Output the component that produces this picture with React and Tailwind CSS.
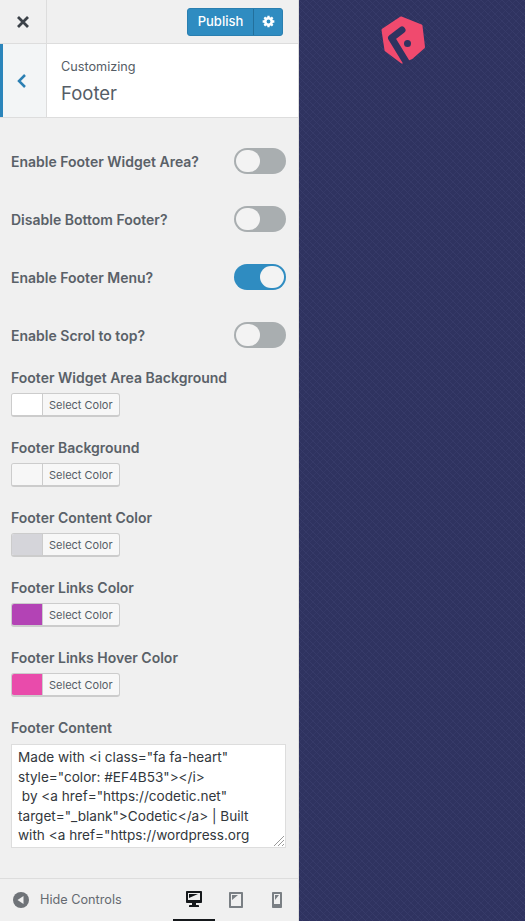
import React from "react";

const toggles = [
  { label: "Enable Footer Widget Area?", on: false },
  { label: "Disable Bottom Footer?", on: false },
  { label: "Enable Footer Menu?", on: true },
  { label: "Enable Scrol to top?", on: false },
];

const colors = [
  { label: "Footer Widget Area Background", swatch: "bg-white" },
  { label: "Footer Background", swatch: "bg-[#f7f7f7]" },
  { label: "Footer Content Color", swatch: "bg-[#d5d5da]" },
  { label: "Footer Links Color", swatch: "bg-[#b343b5]" },
  { label: "Footer Links Hover Color", swatch: "bg-[#e94bab]" },
];

const Toggle = ({ on }) => (
  <div
    className={`flex h-[26px] w-[52px] items-center rounded-full p-[2px] ${
      on ? "justify-end bg-[#2f8cc1]" : "justify-start bg-[#a9aeb0]"
    }`}
  >
    <div className="h-[22px] w-[24px] rounded-full bg-[#f3f3f3]" />
  </div>
);

const ColorButton = ({ swatch }) => (
  <div className="flex h-[24px] w-[109px] overflow-hidden rounded-[3px] border border-[#cccccc] border-b-[2px] bg-[#f7f7f7]">
    <div className={`w-[31px] border-r border-[#cccccc] ${swatch}`} />
    <div className="flex-1 pl-[6px] text-[11px] leading-[22px] text-[#555d66]">Select Color</div>
  </div>
);

const Logo = () => (
  <svg width="46" height="50" viewBox="0 0 46 50">
    <path
      d="M21 3 L41 11 L43.500 32 L31 43 L22 47 L6 35 L3 15 Z"
      fill="#f04a6e"
      stroke="#f04a6e"
      strokeWidth="3"
      strokeLinejoin="round"
    />
    <path d="M22 48.500 L30 44 L24 38 Z" fill="#f04a6e" />
    <path
      d="M22 15 L11.500 23 L28 50"
      fill="none"
      stroke="#2f3360"
      strokeWidth="7"
      strokeLinecap="round"
      strokeLinejoin="round"
    />
    <circle cx="27.500" cy="28.500" r="3.500" fill="#2f3360" />
  </svg>
);

const App = () => {
  return (
    <div className="flex h-[921px] w-[525px] overflow-hidden font-['Inter',sans-serif]">
      <div className="flex h-full w-[299px] flex-col border-r border-[#dddddd] bg-[#f0f0f0]">
        <div className="flex h-[44px] items-center border-b border-[#dddddd]">
          <div className="flex h-full w-[47px] items-center justify-center border-r border-[#dddddd]">
            <svg width="14" height="14" viewBox="0 0 14 14" fill="none" stroke="#3b4148" strokeWidth="2.800">
              <path d="M2 2 L12 12 M12 2 L2 12" />
            </svg>
          </div>
          <div className="ml-[140px] flex h-[28px] w-[96px] rounded-[3px] border border-[#2a7fb0] bg-[#2f8cc1] text-white">
            <div className="flex w-[66px] items-center justify-center border-r border-[#23709c] text-[13px] font-medium">
              Publish
            </div>
            <div className="flex flex-1 items-center justify-center">
              <svg width="13" height="13" viewBox="0 0 20 20" fill="none" stroke="#ffffff">
                <circle cx="10" cy="10" r="5" strokeWidth="4" />
                <path
                  d="M10 1 V5 M10 15 V19 M1 10 H5 M15 10 H19 M3.600 3.600 L6.500 6.500 M13.500 13.500 L16.400 16.400 M3.600 16.400 L6.500 13.500 M13.500 6.500 L16.400 3.600"
                  strokeWidth="3.500"
                />
              </svg>
            </div>
          </div>
        </div>

        <div className="flex h-[74px] border-b border-[#dddddd] bg-white">
          <div className="flex w-[47px] items-center justify-center border-r border-[#dddddd] border-l-[3px] border-l-[#2b85bb] bg-[#f3f5f6] pr-[6px]">
            <svg width="12" height="16" viewBox="0 0 12 16" fill="none" stroke="#2b7fb3" strokeWidth="2.500">
              <path d="M9 2 L3 8 L9 14" />
            </svg>
          </div>
          <div className="pl-[14px] pt-[14px]">
            <div className="text-[12.700px] leading-[18px] text-[#555d66]">Customizing</div>
            <div className="mt-[4px] text-[18.500px] leading-[26px] text-[#555d66]">Footer</div>
          </div>
        </div>

        <div className="flex flex-1 flex-col px-[11px] pr-[12px]">
          <div className="flex flex-col gap-[32px] pt-[30px]">
            {toggles.map((t) => (
              <div key={t.label} className="flex h-[26px] items-center justify-between">
                <span className="text-[14px] font-semibold text-[#5a6168]">{t.label}</span>
                <Toggle on={t.on} />
              </div>
            ))}
          </div>
          <div className="mt-[20px] flex flex-col gap-[21px]">
            {colors.map((c) => (
              <div key={c.label}>
                <div className="mb-[5px] text-[14px] font-semibold leading-[20px] text-[#5a6168]">{c.label}</div>
                <ColorButton swatch={c.swatch} />
              </div>
            ))}
          </div>
          <div className="mt-[21px] text-[14px] font-semibold leading-[20px] text-[#5a6168]">Footer Content</div>
          <div className="relative mt-[6px] h-[104px] overflow-hidden border border-[#dddddd] bg-white px-[6px] pt-[3px] text-[13.600px] leading-[19.600px] whitespace-pre text-[#32373c]">
            {'Made with <i class="fa fa-heart"\nstyle="color: #EF4B53"></i>\n by <a href="https://codetic.net"\ntarget="_blank">Codetic</a> | Built\nwith <a href="https://wordpress.org'}
            <svg className="absolute right-0 bottom-0" width="12" height="12" viewBox="0 0 12 12" stroke="#9a9a9a">
              <path d="M1 11 L11 1 M5 11 L11 5 M9 11 L11 9" />
            </svg>
          </div>
        </div>

        <div className="flex h-[43px] items-center border-t border-[#dddddd] pl-[13px]">
          <svg width="16" height="16" viewBox="0 0 16 16">
            <circle cx="8" cy="8" r="8" fill="#6f7378" />
            <path d="M10.500 4 V12 L4.500 8 Z" fill="#f0f0f0" />
          </svg>
          <span className="ml-[11px] w-[133px] text-[12.700px] text-[#656a70]">Hide Controls</span>
          <div className="flex h-full w-[42px] items-center justify-center border-b-2 border-[#16191c]">
            <svg width="20" height="20" viewBox="0 0 20 20" fill="#16191c" fillRule="evenodd">
              <path d="M3 2h14c.55 0 1 .46 1 1v10c0 .55-.45 1-1 1h-5v2h2c.55 0 1 .45 1 1v1H5v-1c0-.55.45-1 1-1h2v-2H3c-.55 0-1-.45-1-1V3c0-.54.45-1 1-1zm13 9V4H4v7h12zM5 5h9L5 9V5z" />
            </svg>
          </div>
          <div className="flex w-[41px] items-center justify-center">
            <svg width="20" height="20" viewBox="0 0 20 20" fill="#7a7f84" fillRule="evenodd">
              <path d="M4 2h12c.55 0 1 .45 1 1v14c0 .55-.45 1-1 1H4c-.55 0-1-.45-1-1V3c0-.55.45-1 1-1zm11 14V4H5v12h10zM6 5h6l-6 5V5z" />
            </svg>
          </div>
          <div className="flex w-[42px] items-center justify-center">
            <svg width="20" height="20" viewBox="0 0 20 20" fill="#7a7f84" fillRule="evenodd">
              <path d="M6 2h8c.55 0 1 .45 1 1v14c0 .55-.45 1-1 1H6c-.55 0-1-.45-1-1V3c0-.55.45-1 1-1zm7 12V4H7v10h6zM8 5h4l-4 5V5z" />
            </svg>
          </div>
        </div>
      </div>

      <div className="flex flex-1 justify-center bg-[#2f3360] bg-[linear-gradient(45deg,transparent_44%,#373b69_50%,transparent_56%),linear-gradient(135deg,transparent_46%,#343866_50%,transparent_54%)] bg-size-[7px_7px] pt-[15px]">
        <div className="-ml-[19px]">
          <Logo />
        </div>
      </div>
    </div>
  );
};

export default App;
